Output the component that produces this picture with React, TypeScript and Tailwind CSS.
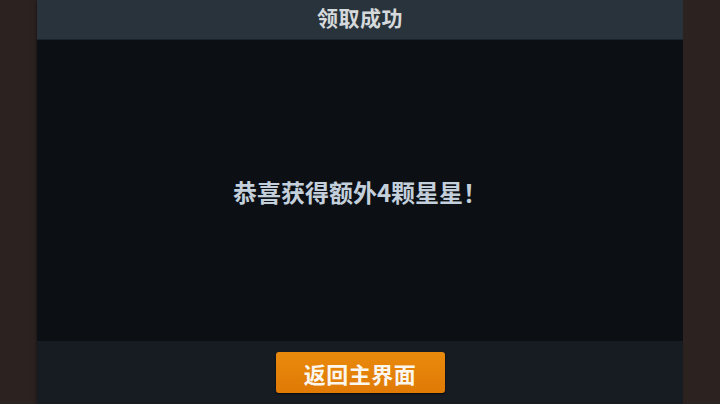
import React from "react";

export default function App() {
  return (
    <div
      className="w-[720px] h-[404px] flex bg-[#2b2220] overflow-hidden"
      style={{ fontFamily: '"Noto Sans CJK SC", "Noto Sans", sans-serif' }}
    >
      <div className="w-[37px] h-full bg-[#2c2321]" />
      <div className="w-[646px] h-full flex flex-col shadow-[0_0_4px_rgba(0,0,0,0.6)]">
        <div className="h-[40px] bg-[#28333b] flex items-center justify-center border-b border-[#1d252c] pb-[5px]">
          <span className="text-[21px] font-bold text-[#d6d9db] leading-none tracking-[0.5px]">领取成功</span>
        </div>
        <div className="flex-1 bg-[#0c0f14] flex items-center justify-center pt-[3px]">
          <span className="text-[24px] font-bold text-[#c3d0dc] leading-none">恭喜获得额外4颗星星！</span>
        </div>
        <div className="h-[63px] bg-[#171c23] flex items-start justify-center pt-[11px]">
          <div className="w-[169px] h-[41px] rounded-[3px] bg-gradient-to-b from-[#e98a0c] to-[#e07a06] flex items-center justify-center shadow-[0_1px_2px_rgba(0,0,0,0.7)]">
            <span className="text-[22px] font-bold text-[#fbf6ee] leading-none tracking-[0.5px]">返回主界面</span>
          </div>
        </div>
      </div>
      <div className="w-[37px] h-full bg-[#2c2321]" />
    </div>
  );
}
